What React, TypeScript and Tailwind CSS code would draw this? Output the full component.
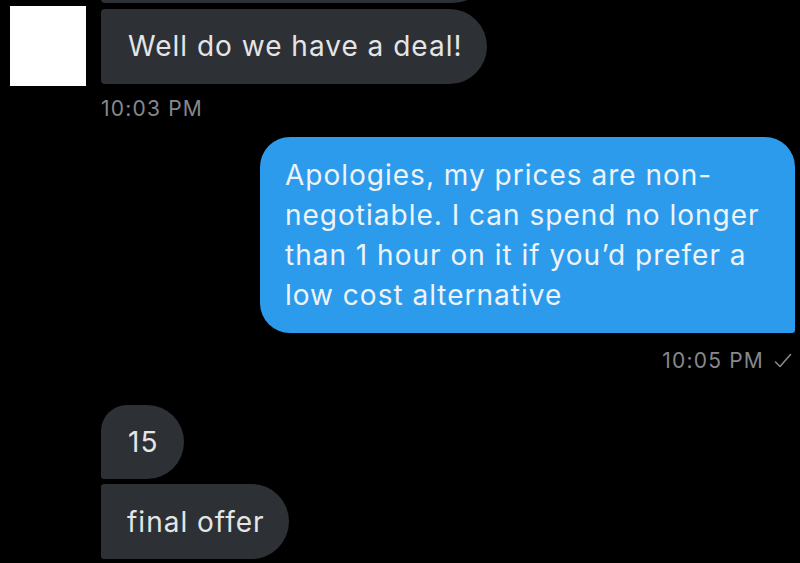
import React from "react";

export default function App() {
  return (
    <div className="w-[800px] h-[563px] bg-black overflow-hidden font-['Inter','Liberation_Sans',sans-serif] antialiased">
      <div className="flex flex-col">
        {/* partially visible previous bubble */}
        <div className="ml-[101px] -mt-[72px] w-[389px] h-[75px] bg-[#2d3034] rounded-l-[4px] rounded-r-[38px]" />

        {/* incoming: Well do we have a deal! */}
        <div className="flex items-center mt-[3px]">
          <div className="ml-[10px] w-[76px] h-[80px] bg-white" />
          <div className="ml-[15px] w-[386px] h-[75px] flex items-center pl-[27px] bg-[#2d3034] rounded-l-[4px] rounded-r-[38px] text-[28px] tracking-[1px] text-[#e4e5e7]">
            Well do we have a deal!
          </div>
        </div>

        <div className="ml-[101px] mt-[11px] h-[24px] leading-[24px] text-[21px] text-[#85888d] tracking-[1.2px]">
          10:03 PM
        </div>

        {/* outgoing blue bubble */}
        <div className="self-end mr-[5px] mt-[16px] w-[535px] h-[196px] bg-[#2d9bec] rounded-tl-[30px] rounded-tr-[30px] rounded-bl-[30px] rounded-br-[3px] pl-[25px] py-[18px] text-[28px] tracking-[1px] leading-[40px] text-[#eef3f8]">
          Apologies, my prices are non-
          <br />
          negotiable. I can spend no longer
          <br />
          than 1 hour on it if you’d prefer a
          <br />
          low cost alternative
        </div>

        <div className="self-end mr-[8px] mt-[16px] h-[24px] flex items-center gap-[10px] text-[21px] leading-[24px] text-[#85888d] tracking-[1.2px]">
          <span>10:05 PM</span>
          <svg width="18" height="16" viewBox="0 0 18 16" fill="none">
            <polyline points="1.5,9 6,13.5 16.5,1.5" stroke="#85888d" strokeWidth="1.6" strokeLinecap="round" strokeLinejoin="round" />
          </svg>
        </div>

        {/* incoming: 15 */}
        <div className="ml-[101px] mt-[32px] w-[83px] h-[74px] flex items-center pl-[27px] bg-[#2d3034] rounded-tl-[26px] rounded-bl-[3px] rounded-r-[37px] text-[28px] tracking-[1px] text-[#e4e5e7]">
          15
        </div>

        {/* incoming: final offer */}
        <div className="ml-[101px] mt-[5px] w-[188px] h-[75px] flex items-center pl-[26px] bg-[#2d3034] rounded-l-[3px] rounded-r-[38px] text-[28px] tracking-[1px] text-[#e4e5e7]">
          final offer
        </div>
      </div>
    </div>
  );
}
